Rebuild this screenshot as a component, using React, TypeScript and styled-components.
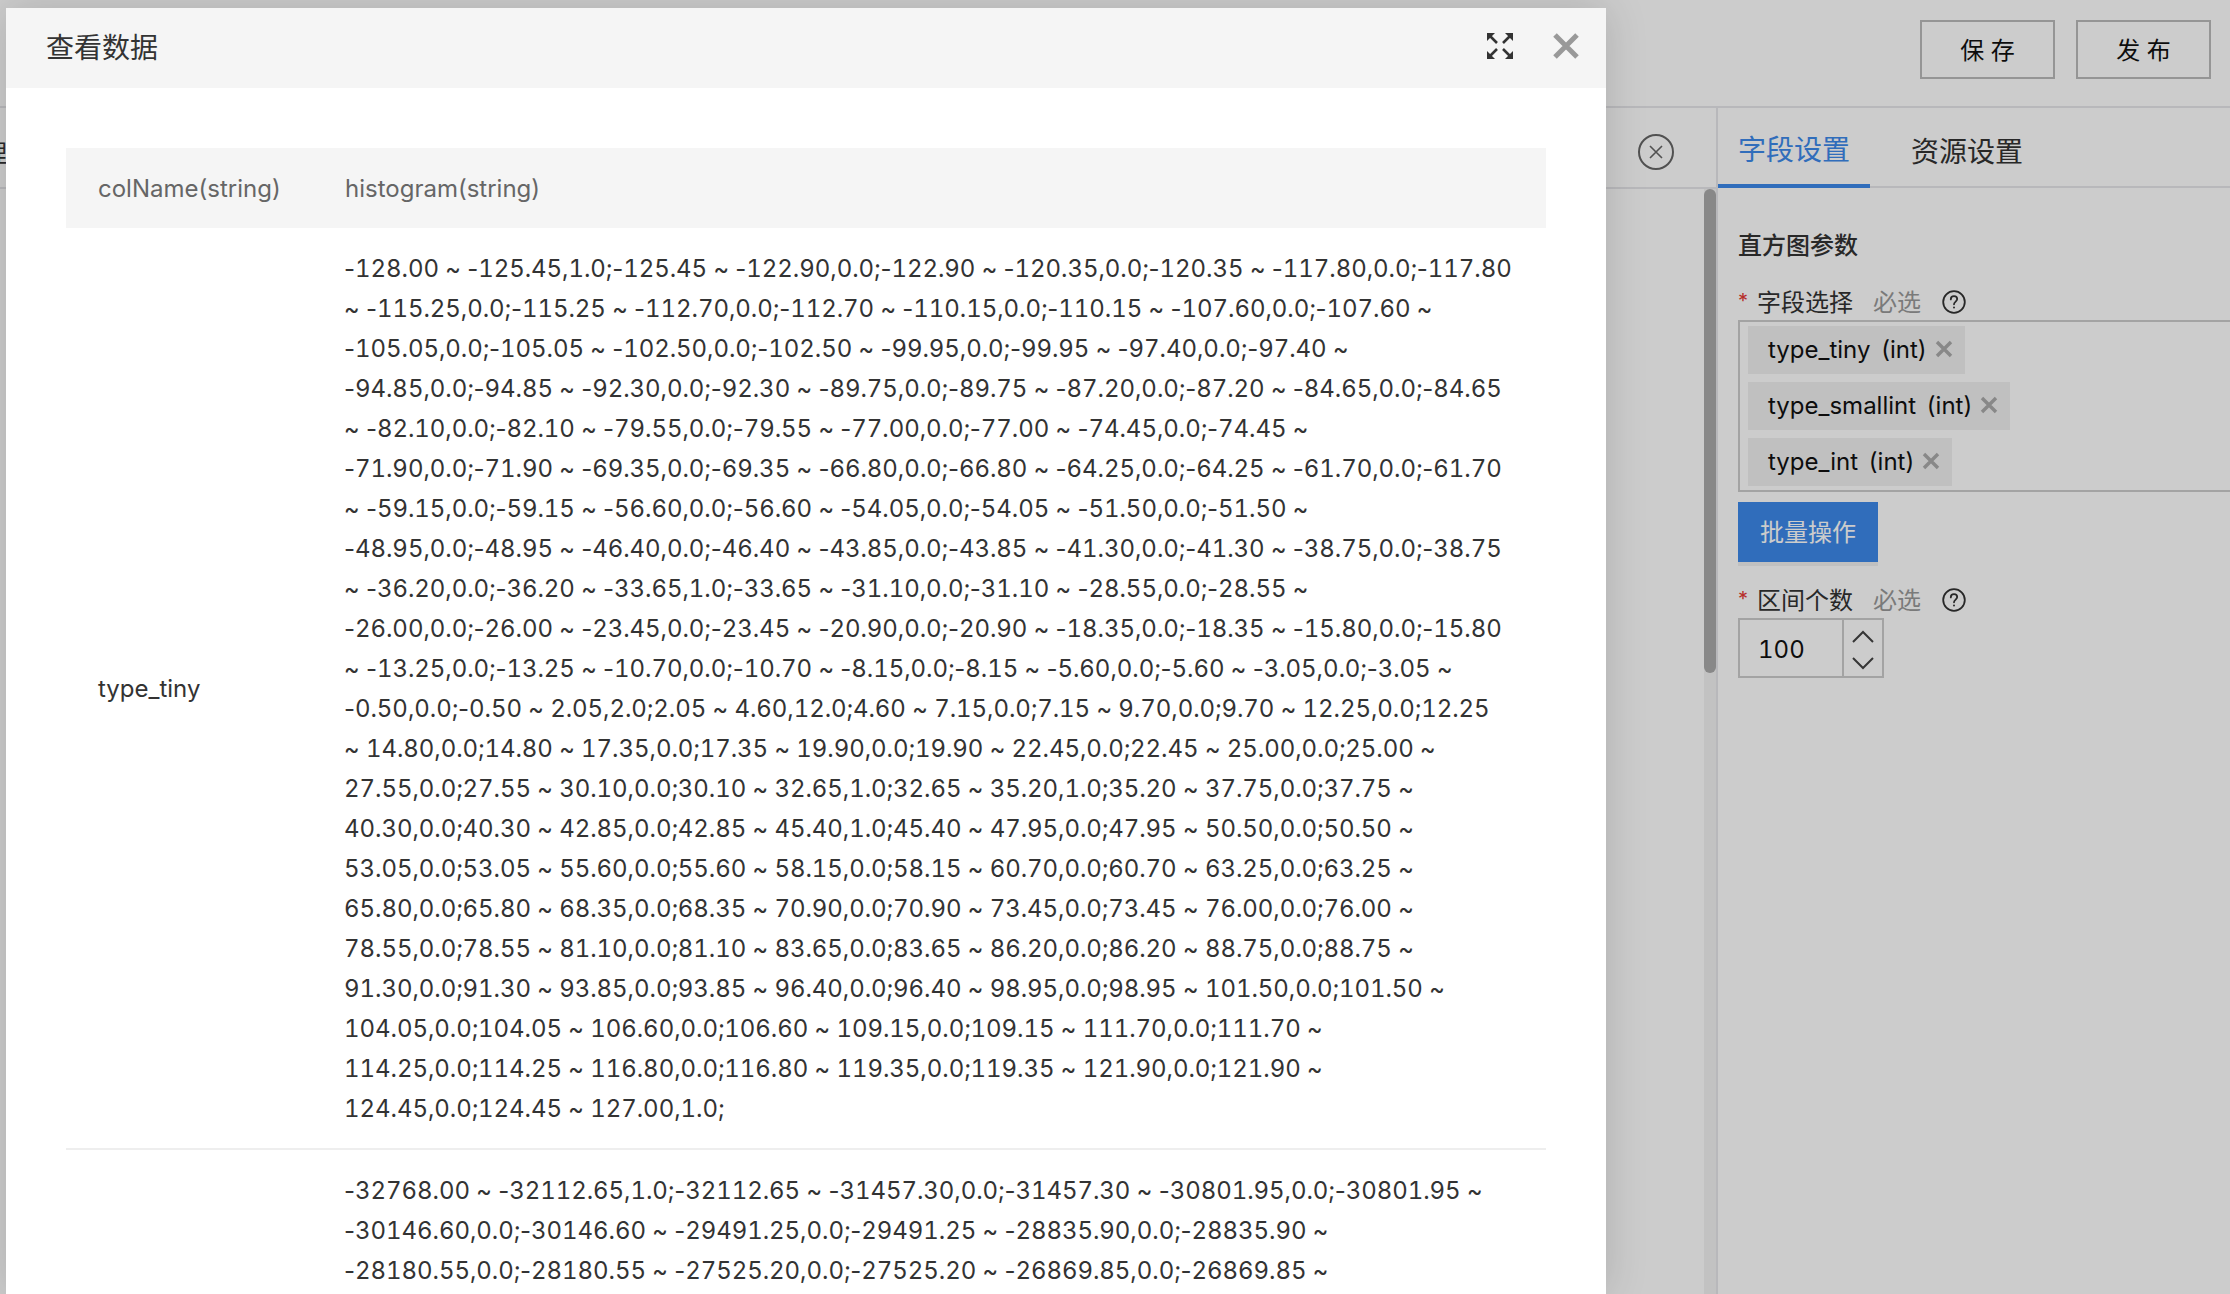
import React from 'react';
import styled, { createGlobalStyle } from 'styled-components';

const Global = createGlobalStyle`
    html,body{
        margin:0;
        padding:0;
        height:100%;
        overflow:hidden;
        background:#fff;
    }
    #root{
        width:2230px;
        height:1294px;
        overflow:hidden;
        position:relative;
    }
    *{
        box-sizing:border-box;
    }
`

const FONT = `Inter,"Noto Sans CJK SC",sans-serif`;

const tinyLines = [
    '-128.00 ~ -125.45,1.0;-125.45 ~ -122.90,0.0;-122.90 ~ -120.35,0.0;-120.35 ~ -117.80,0.0;-117.80',
    '~ -115.25,0.0;-115.25 ~ -112.70,0.0;-112.70 ~ -110.15,0.0;-110.15 ~ -107.60,0.0;-107.60 ~',
    '-105.05,0.0;-105.05 ~ -102.50,0.0;-102.50 ~ -99.95,0.0;-99.95 ~ -97.40,0.0;-97.40 ~',
    '-94.85,0.0;-94.85 ~ -92.30,0.0;-92.30 ~ -89.75,0.0;-89.75 ~ -87.20,0.0;-87.20 ~ -84.65,0.0;-84.65',
    '~ -82.10,0.0;-82.10 ~ -79.55,0.0;-79.55 ~ -77.00,0.0;-77.00 ~ -74.45,0.0;-74.45 ~',
    '-71.90,0.0;-71.90 ~ -69.35,0.0;-69.35 ~ -66.80,0.0;-66.80 ~ -64.25,0.0;-64.25 ~ -61.70,0.0;-61.70',
    '~ -59.15,0.0;-59.15 ~ -56.60,0.0;-56.60 ~ -54.05,0.0;-54.05 ~ -51.50,0.0;-51.50 ~',
    '-48.95,0.0;-48.95 ~ -46.40,0.0;-46.40 ~ -43.85,0.0;-43.85 ~ -41.30,0.0;-41.30 ~ -38.75,0.0;-38.75',
    '~ -36.20,0.0;-36.20 ~ -33.65,1.0;-33.65 ~ -31.10,0.0;-31.10 ~ -28.55,0.0;-28.55 ~',
    '-26.00,0.0;-26.00 ~ -23.45,0.0;-23.45 ~ -20.90,0.0;-20.90 ~ -18.35,0.0;-18.35 ~ -15.80,0.0;-15.80',
    '~ -13.25,0.0;-13.25 ~ -10.70,0.0;-10.70 ~ -8.15,0.0;-8.15 ~ -5.60,0.0;-5.60 ~ -3.05,0.0;-3.05 ~',
    '-0.50,0.0;-0.50 ~ 2.05,2.0;2.05 ~ 4.60,12.0;4.60 ~ 7.15,0.0;7.15 ~ 9.70,0.0;9.70 ~ 12.25,0.0;12.25',
    '~ 14.80,0.0;14.80 ~ 17.35,0.0;17.35 ~ 19.90,0.0;19.90 ~ 22.45,0.0;22.45 ~ 25.00,0.0;25.00 ~',
    '27.55,0.0;27.55 ~ 30.10,0.0;30.10 ~ 32.65,1.0;32.65 ~ 35.20,1.0;35.20 ~ 37.75,0.0;37.75 ~',
    '40.30,0.0;40.30 ~ 42.85,0.0;42.85 ~ 45.40,1.0;45.40 ~ 47.95,0.0;47.95 ~ 50.50,0.0;50.50 ~',
    '53.05,0.0;53.05 ~ 55.60,0.0;55.60 ~ 58.15,0.0;58.15 ~ 60.70,0.0;60.70 ~ 63.25,0.0;63.25 ~',
    '65.80,0.0;65.80 ~ 68.35,0.0;68.35 ~ 70.90,0.0;70.90 ~ 73.45,0.0;73.45 ~ 76.00,0.0;76.00 ~',
    '78.55,0.0;78.55 ~ 81.10,0.0;81.10 ~ 83.65,0.0;83.65 ~ 86.20,0.0;86.20 ~ 88.75,0.0;88.75 ~',
    '91.30,0.0;91.30 ~ 93.85,0.0;93.85 ~ 96.40,0.0;96.40 ~ 98.95,0.0;98.95 ~ 101.50,0.0;101.50 ~',
    '104.05,0.0;104.05 ~ 106.60,0.0;106.60 ~ 109.15,0.0;109.15 ~ 111.70,0.0;111.70 ~',
    '114.25,0.0;114.25 ~ 116.80,0.0;116.80 ~ 119.35,0.0;119.35 ~ 121.90,0.0;121.90 ~',
    '124.45,0.0;124.45 ~ 127.00,1.0;',
];

const smallLines = [
    '-32768.00 ~ -32112.65,1.0;-32112.65 ~ -31457.30,0.0;-31457.30 ~ -30801.95,0.0;-30801.95 ~',
    '-30146.60,0.0;-30146.60 ~ -29491.25,0.0;-29491.25 ~ -28835.90,0.0;-28835.90 ~',
    '-28180.55,0.0;-28180.55 ~ -27525.20,0.0;-27525.20 ~ -26869.85,0.0;-26869.85 ~',
];

const rows = [
    { name: 'type_tiny', lines: tinyLines },
    { name: '', lines: smallLines },
];

const tags = ['type_tiny (int)', 'type_smallint (int)', 'type_int (int)'];

function Cross({size,weight,color}:{size:number,weight:number,color:string}){
    return (
        <svg width={size} height={size} viewBox={`0 0 ${size} ${size}`} fill="none" stroke={color} strokeWidth={weight}>
            <path d={`M2 2L${size-2} ${size-2}M${size-2} 2L2 ${size-2}`}/>
        </svg>
    );
}

function FullscreenIcon(){
    return (
        <svg width="26" height="26" viewBox="0 0 26 26" fill="#333" stroke="#333">
            <path d="M0 0h8L0 8z" stroke="none"/>
            <path d="M26 0h-8l8 8z" stroke="none"/>
            <path d="M0 26h8L0 18z" stroke="none"/>
            <path d="M26 26h-8l8-8z" stroke="none"/>
            <path d="M3 3l7 7M23 3l-7 7M3 23l7-7M23 23l-7-7" strokeWidth="2.6" fill="none"/>
        </svg>
    );
}

function HelpIcon(){
    return (
        <svg width="24" height="24" viewBox="0 0 24 24" fill="none" stroke="#333" strokeWidth="1.8">
            <circle cx="12" cy="12" r="10.8"/>
            <path d="M8.8 9.4c0-1.9 1.4-3.2 3.2-3.2s3.2 1.2 3.2 2.9c0 2.4-3.2 2.6-3.2 5.2" strokeLinecap="round"/>
            <circle cx="12" cy="17.6" r="1" fill="#333" stroke="none"/>
        </svg>
    );
}

function Chevron({up}:{up?:boolean}){
    return (
        <svg width="22" height="13" viewBox="0 0 22 13" fill="none" stroke="#444" strokeWidth="2">
            <path d={up ? 'M1 12 11 2l10 10' : 'M1 1l10 10L21 1'}/>
        </svg>
    );
}

function Field({label}:{label:string}){
    return (
        <FieldLabel>
            <Star>*</Star>
            <LabelText>{label}</LabelText>
            <Optional>必选</Optional>
            <HelpIcon/>
        </FieldLabel>
    );
}

// tabular digits also widen the hyphen in this font, so hyphens get their own span
function DataLine({text}:{text:string}){
    return (
        <Line>
            {text.split('-').map((part,i)=>(
                <React.Fragment key={i}>
                    {i>0 ? <Minus>-</Minus> : null}
                    {part}
                </React.Fragment>
            ))}
        </Line>
    );
}

export default function App(){
    return (
        <>
            <Global/>
            <Page>
                <TopBar>
                    <OutlineButton>保 存</OutlineButton>
                    <OutlineButton>发 布</OutlineButton>
                </TopBar>
                <Main>
                    <Canvas>
                        <CanvasHead>
                            <CanvasTab>理</CanvasTab>
                            <CloseCircle>
                                <Cross size={16} weight={1.6} color="#666"/>
                            </CloseCircle>
                        </CanvasHead>
                        <ScrollTrack>
                            <ScrollThumb/>
                        </ScrollTrack>
                    </Canvas>
                    <Panel>
                        <Tabs>
                            <Tab $active>字段设置</Tab>
                            <Tab>资源设置</Tab>
                        </Tabs>
                        <PanelBody>
                            <PanelTitle>直方图参数</PanelTitle>
                            <Field label="字段选择"/>
                            <TagBox>
                                {tags.map((tag)=>(
                                    <Tag key={tag}>
                                        {tag}
                                        <TagClose>
                                            <Cross size={18} weight={3.4} color="#aaa"/>
                                        </TagClose>
                                    </Tag>
                                ))}
                            </TagBox>
                            <BlueButton>批量操作</BlueButton>
                            <Field label="区间个数"/>
                            <NumberInput>
                                <NumberValue>100</NumberValue>
                                <Stepper>
                                    <Chevron up/>
                                    <Chevron/>
                                </Stepper>
                            </NumberInput>
                        </PanelBody>
                    </Panel>
                </Main>
            </Page>
            <Overlay/>
            <Modal>
                <ModalHeader>
                    <ModalTitle>查看数据</ModalTitle>
                    <HeaderTools>
                        <FullscreenIcon/>
                        <Cross size={26} weight={5} color="#999"/>
                    </HeaderTools>
                </ModalHeader>
                <ModalBody>
                    <DataTable>
                        <thead>
                            <tr>
                                <HeadCell>colName(string)</HeadCell>
                                <HeadCell>histogram(string)</HeadCell>
                            </tr>
                        </thead>
                        <tbody>
                            {rows.map((row,index)=>(
                                <tr key={index}>
                                    <Cell>{row.name}</Cell>
                                    <Cell>
                                        {row.lines.map((line,i)=>(
                                            <DataLine key={i} text={line}/>
                                        ))}
                                    </Cell>
                                </tr>
                            ))}
                        </tbody>
                    </DataTable>
                </ModalBody>
            </Modal>
        </>
    );
}

const Page = styled.div`
    width:2230px;
    height:1294px;
    display:flex;
    flex-direction:column;
    background:#fff;
    font-family:${FONT};
    color:#333;
`
const TopBar = styled.div`
    height:108px;
    flex:none;
    display:flex;
    justify-content:flex-end;
    gap:21px;
    padding:20px 19px 0 0;
    border-bottom:2px solid #e6e6ea;
`
const OutlineButton = styled.div`
    width:135px;
    height:59px;
    display:flex;
    align-items:center;
    justify-content:center;
    padding-bottom:3px;
    border:2px solid #bbb;
    font-size:24px;
    color:#111;
`
const Main = styled.div`
    flex:1;
    display:flex;
    min-height:0;
`
const Canvas = styled.div`
    width:1716px;
    flex:none;
    display:flex;
    flex-direction:column;
    position:relative;
`
const CanvasHead = styled.div`
    height:81px;
    flex:none;
    display:flex;
    align-items:center;
    justify-content:space-between;
    padding:8px 42px 0 0;
    border-bottom:2px solid #e6e6ea;
`
const CanvasTab = styled.span`
    font-size:24px;
    margin-left:-17px;
`
const CloseCircle = styled.div`
    width:36px;
    height:36px;
    border:2px solid #666;
    border-radius:50%;
    display:flex;
    align-items:center;
    justify-content:center;
`
const ScrollTrack = styled.div`
    position:absolute;
    top:81px;
    right:0;
    bottom:0;
    width:12px;
    background:#f3f3f3;
`
const ScrollThumb = styled.div`
    height:484px;
    border-radius:6px;
    background:#aaa;
`
const Panel = styled.div`
    width:560px;
    flex:none;
    border-left:2px solid #e6e6ea;
`
const Tabs = styled.div`
    height:80px;
    display:flex;
    border-bottom:2px solid #e6e6ea;
`
const Tab = styled.div<{$active?:boolean}>`
    height:80px;
    display:flex;
    align-items:center;
    padding:3px 20px 0;
    margin-right:${(p)=>p.$active?'21px':'0'};
    font-size:28px;
    color:${(p)=>p.$active?'#3d89ea':'#333'};
    border-bottom:${(p)=>p.$active?'4px solid #3d89ea':'none'};
`
const PanelBody = styled.div`
    padding:40px 0 0 20px;
    display:flex;
    flex-direction:column;
    align-items:flex-start;
`
const PanelTitle = styled.div`
    font-size:24px;
    font-weight:500;
    line-height:36px;
    margin-bottom:22px;
`
const FieldLabel = styled.div`
    height:32px;
    display:flex;
    align-items:center;
    font-size:24px;
    span{
        padding-bottom:3px;
    }
`
const Star = styled.span`
    width:19px;
    color:#e53935;
    font-size:20px;
`
const LabelText = styled.span`
    width:116px;
`
const Optional = styled.span`
    width:69px;
    color:#999;
`
const TagBox = styled.div`
    width:540px;
    margin-top:2px;
    padding:4px 8px;
    border:2px solid #ccc;
    display:flex;
    flex-direction:column;
    align-items:flex-start;
    gap:8px;
`
const Tag = styled.div`
    height:48px;
    display:flex;
    align-items:center;
    padding:0 12px 2px 20px;
    background:#f0f0f0;
    font-size:24px;
    word-spacing:4px;
    color:#111;
`
const TagClose = styled.span`
    display:flex;
    margin-left:8px;
`
const BlueButton = styled.div`
    margin-top:10px;
    margin-bottom:22px;
    width:140px;
    height:60px;
    display:flex;
    align-items:center;
    justify-content:center;
    padding-bottom:3px;
    background:#3d89ea;
    box-shadow:0 4px 0 #f0f0f0;
    color:#fff;
    font-size:24px;
`
const NumberInput = styled.div`
    margin-top:2px;
    width:146px;
    height:60px;
    display:flex;
    border:2px solid #ccc;
`
const NumberValue = styled.div`
    width:104px;
    padding:2px 0 0 18px;
    display:flex;
    align-items:center;
    font-size:24px;
    font-variant-numeric:tabular-nums;
    color:#111;
    border-right:2px solid #ccc;
`
const Stepper = styled.div`
    flex:1;
    display:flex;
    flex-direction:column;
    align-items:center;
    justify-content:center;
    gap:14px;
    padding-top:4px;
`
const Overlay = styled.div`
    position:absolute;
    inset:0;
    background:rgba(0,0,0,0.2);
`
const Modal = styled.div`
    position:absolute;
    left:6px;
    top:8px;
    width:1600px;
    bottom:0;
    display:flex;
    flex-direction:column;
    background:#fff;
    overflow:hidden;
    font-family:${FONT};
    box-shadow:0 0 40px rgba(0,0,0,0.15);
`
const ModalHeader = styled.div`
    height:80px;
    flex:none;
    display:flex;
    align-items:center;
    justify-content:space-between;
    padding:0 27px 4px 40px;
    background:#f5f5f5;
`
const ModalTitle = styled.div`
    font-size:28px;
    color:#333;
`
const HeaderTools = styled.div`
    display:flex;
    align-items:center;
    gap:40px;
`
const ModalBody = styled.div`
    flex:1;
    min-height:0;
    overflow:hidden;
    padding:60px 60px 0;
`
const DataTable = styled.table`
    width:1480px;
    border-collapse:separate;
    border-spacing:0;
    table-layout:fixed;
`
const HeadCell = styled.th`
    height:80px;
    padding:0 32px;
    background:#f5f5f5;
    text-align:left;
    font-size:24px;
    font-weight:400;
    color:#666;
    &:first-child{
        width:247px;
    }
`
const Cell = styled.td`
    padding:20px 32px;
    border-bottom:2px solid #eee;
    font-size:24px;
    color:#333;
`
const Line = styled.div`
    height:40px;
    line-height:40px;
    padding-top:1px;
    margin-left:-1px;
    white-space:nowrap;
    letter-spacing:-0.06px;
    font-variant-numeric:tabular-nums;
    font-kerning:none;
`
const Minus = styled.span`
    font-variant-numeric:normal;
`
